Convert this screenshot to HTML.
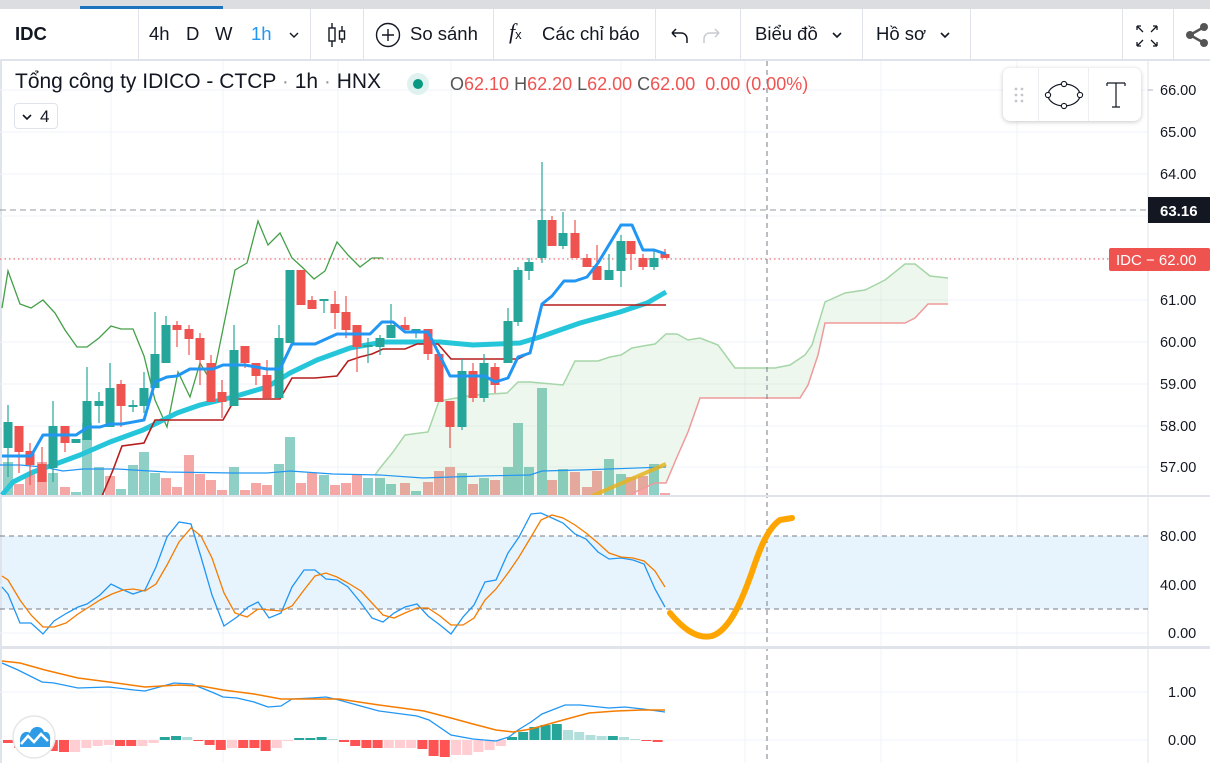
<!DOCTYPE html>
<html><head><meta charset="utf-8">
<style>
*{margin:0;padding:0;box-sizing:border-box}
body{width:1210px;height:763px;overflow:hidden;background:#fff;font-family:"Liberation Sans","Noto Sans CJK SC",sans-serif;color:#131722;position:relative}
#top{position:absolute;left:0;top:0;width:1210px;height:9px;background:#dcdde0}
#topbl{position:absolute;left:80px;top:6px;width:143px;height:3px;background:#1e73be}
#tb{position:absolute;left:0;top:9px;width:1210px;height:52px;background:#fff;border-bottom:2px solid #e0e3eb}
.sep{position:absolute;top:0;width:1px;height:50px;background:#e0e3eb}
.t{position:absolute;top:14px;font-size:18.5px;color:#131722;white-space:nowrap}
svg{position:absolute;left:0;top:0}
.ax{font-size:14.5px;fill:#131722;font-family:"Liberation Sans",sans-serif}
#leg{position:absolute;left:15px;top:70px;font-size:21px;white-space:nowrap;color:#131722}
#ohlc{position:absolute;left:450px;top:74px;font-size:18px;white-space:nowrap;color:#ef5350}
#ohlc b{font-weight:normal;color:#555}
#btn4{position:absolute;left:14px;top:103px;width:44px;height:26px;border:1px solid #e0e3eb;border-radius:4px;font-size:17px;padding:3px 0 0 25px}
#ft{position:absolute;left:1003px;top:68px;width:138px;height:53px;background:#fff;border-radius:7px;box-shadow:0 1px 5px rgba(0,0,0,.22)}
</style></head><body>
<svg width="1210" height="763" id="c">
<defs>
<clipPath id="mp"><rect x="0" y="61" width="1148" height="435"/></clipPath>
<clipPath id="sp"><rect x="0" y="498" width="1148" height="149"/></clipPath>
<clipPath id="cp"><rect x="0" y="649" width="1148" height="114"/></clipPath>
</defs>
<rect x="0" y="61" width="2" height="702" fill="#dfe3ec"/>
<g stroke="#f0f3fa" stroke-width="1">
<line x1="111" y1="61" x2="111" y2="763"/><line x1="223" y1="61" x2="223" y2="763"/><line x1="338" y1="61" x2="338" y2="763"/><line x1="451" y1="61" x2="451" y2="763"/><line x1="621" y1="61" x2="621" y2="763"/><line x1="745" y1="61" x2="745" y2="763"/><line x1="881" y1="61" x2="881" y2="763"/><line x1="1017" y1="61" x2="1017" y2="763"/>
<line x1="0" y1="90" x2="1148" y2="90"/><line x1="0" y1="132" x2="1148" y2="132"/><line x1="0" y1="174" x2="1148" y2="174"/><line x1="0" y1="216" x2="1148" y2="216"/><line x1="0" y1="258" x2="1148" y2="258"/><line x1="0" y1="300" x2="1148" y2="300"/><line x1="0" y1="342" x2="1148" y2="342"/><line x1="0" y1="384" x2="1148" y2="384"/><line x1="0" y1="426" x2="1148" y2="426"/><line x1="0" y1="467" x2="1148" y2="467"/>
<line x1="0" y1="585" x2="1148" y2="585"/><line x1="0" y1="633" x2="1148" y2="633"/><line x1="0" y1="692" x2="1148" y2="692"/><line x1="0" y1="740" x2="1148" y2="740"/>
</g>
<rect x="2" y="536" width="1146" height="73" fill="#e3f2fd" opacity=".85"/>
<g id="vol" clip-path="url(#mp)"></g>
<g clip-path="url(#mp)">
<polygon fill="#4caf50" fill-opacity=".1" points="375,475 380,468 393,452 405,435 428,432 439,401 462,397 475,395 507,393 518,382 530,382 563,385 575,361 598,361 610,357 621,355 632,348 643,346 655,344 666,334 677,334 688,340 700,338 718,345 735,368 775,368 790,365 805,355 812,345 825,302 845,293 865,290 885,280 905,264 915,264 930,276 948,278 948,304 928,304 915,318 905,323 825,323 818,355 808,385 800,398 730,398 700,398 688,432 677,457 666,483 655,483 633,493 630,500 375,500"/>
<polyline fill="none" stroke="#a5d6a7" stroke-width="1.5" points="375,475 380,468 393,452 405,435 428,432 439,401 462,397 475,395 507,393 518,382 530,382 563,385 575,361 598,361 610,357 621,355 632,348 643,346 655,344 666,334 677,334 688,340 700,338 718,345 735,368 775,368 790,365 805,355 812,345 825,302 845,293 865,290 885,280 905,264 915,264 930,276 948,278"/>
<polyline fill="none" stroke="#ef9a9a" stroke-width="1.5" points="628,500 633,493 655,483 666,483 677,457 688,432 700,398 730,398 800,398 808,385 818,355 825,323 905,323 915,318 928,304 948,304"/>
<polyline fill="none" stroke="#2196f3" stroke-width="1.2" points="0,465 20,465 43,467 63,471 83,469 117,469 167,472 233,473 267,473 290,471 333,474 380,475 423,478 480,476 530,475 542,471 580,470 666,467"/>
<line x1="592" y1="496" x2="666" y2="464" stroke="#e6b422" stroke-width="4" opacity=".85"/>
<line x1="0" y1="210" x2="1148" y2="210" stroke="#9598a1" stroke-dasharray="6,4"/>
<line x1="0" y1="259" x2="1148" y2="259" stroke="#ef5350" stroke-dasharray="1.5,3"/>
<polyline fill="none" stroke="#43a047" stroke-width="1.3" points="2,308 8,271 20,304 31,308 43,300 55,313 65,330 77,347 87,347 99,338 111,326 121,329 133,329 144,356 155,400 167,427 178,372 190,397 200,363 212,383 235,270 247,263 258,221 268,245 280,233 292,258 302,267 314,279 325,271 337,242 348,255 360,267 372,258 383,258"/>
<polyline fill="none" stroke="#26c6da" stroke-width="5" stroke-linejoin="round" points="2,495 13,482 33,472 53,465 80,455 110,442 143,430 177,413 200,405 233,397 267,387 290,373 317,360 350,348 383,342 440,342 473,345 520,343 540,337 580,323 620,312 647,303 666,292"/>
<polyline fill="none" stroke="#b71c1c" stroke-width="1.6" points="102,496 113,470 122,446 144,443 155,420 223,420 235,399 280,399 292,378 315,378 337,376 348,361 360,357 372,354 383,349 405,349 417,344 438,344 451,359 518,359 530,353 542,305 666,305"/>
<g id="cand"></g>
<polyline fill="none" stroke="#2196f3" stroke-width="3" stroke-linejoin="round" points="2,456 31,456 43,435 76,435 88,427 100,427 110,424 122,424 144,420 155,382 167,377 177,376 190,369 213,369 223,365 245,365 267,369 280,369 292,344 315,344 337,334 370,334 382,322 393,322 405,332 428,332 450,376 485,376 495,382 508,378 518,357 530,353 542,304 552,296 564,281 575,281 587,277 598,263 621,225 632,225 643,250 654,250 666,254"/>
</g>
<line x1="767" y1="61" x2="767" y2="763" stroke="#787b86" stroke-dasharray="5,4"/>
<rect x="0" y="495" width="1210" height="2" fill="#e0e3eb"/>
<rect x="0" y="646" width="1210" height="3" fill="#e0e3eb"/>
<line x1="1148" y1="61" x2="1148" y2="763" stroke="#e0e3eb"/>
<g clip-path="url(#sp)">
<line x1="0" y1="536" x2="1148" y2="536" stroke="#787b86" stroke-dasharray="5,4"/>
<line x1="0" y1="609" x2="1148" y2="609" stroke="#787b86" stroke-dasharray="5,4"/>
<polyline fill="none" stroke="#2196f3" stroke-width="1.3" points="2,587 8,594 20,623 31,623 43,634 54,621 67,613 78,607 87,604 100,595 111,584 121,589 133,594 145,590 156,567 167,537 179,522 191,524 201,557 212,595 224,626 237,617 248,607 258,602 269,618 281,613 292,587 304,570 315,570 326,579 337,580 348,587 361,603 372,618 383,622 394,613 405,607 417,604 428,616 440,625 451,634 463,617 474,605 485,582 496,580 508,553 519,537 531,514 541,513 552,518 563,523 575,534 586,539 598,552 609,559 621,558 633,560 644,564 655,589 665,607"/>
<polyline fill="none" stroke="#f57c00" stroke-width="1.3" points="2,576 8,580 20,600 31,615 43,627 54,627 66,623 78,614 89,607 100,600 112,594 123,590 133,589 145,591 156,584 167,565 179,542 191,528 201,536 212,558 224,593 235,613 247,617 258,609 269,610 281,611 292,606 304,590 315,576 326,573 337,577 348,583 361,591 372,603 383,615 394,618 405,613 417,608 428,608 440,616 451,625 463,625 474,618 485,600 496,589 508,573 519,557 531,537 541,520 552,515 563,518 575,525 586,533 598,543 609,553 621,557 633,558 644,561 655,571 665,587"/>
<path d="M670,613 C680,625 695,640 712,636 C730,630 742,600 752,572 C760,548 768,528 780,520 L792,518" fill="none" stroke="#ffa500" stroke-width="6" stroke-linecap="round"/>
</g>
<g clip-path="url(#cp)">
<g id="hist"></g>
<polyline fill="none" stroke="#2196f3" stroke-width="1.3" points="2,663 18,670 42,682 54,683 78,688 109,687 134,690 145,691 174,683 192,684 214,693 223,697 237,698 254,702 268,707 281,706 292,699 312,698 326,697 339,700 357,705 379,711 402,714 417,716 429,720 451,735 473,739 496,741 509,737 518,730 531,722 542,714 565,705 580,705 609,708 625,707 643,709 665,712"/>
<polyline fill="none" stroke="#f57c00" stroke-width="1.5" points="2,661 20,663 45,670 78,678 109,682 145,687 179,685 201,686 223,690 254,694 281,699 339,699 379,705 424,711 451,718 473,724 496,730 513,732 531,729 563,720 589,713 616,711 643,710 665,710"/>
</g>
<circle cx="34" cy="737" r="21" fill="#fff" stroke="#e6e6e6" stroke-width="1.5"/>
<path d="M20,747 L20,740 C20,733 26,730 30,733 C32,725 42,725 44,732 C49,731 51,736 50,741 L50,747 Z" fill="#2e9be6"/>
<path d="M21,744 L28,736 L34,742 L41,734 L48,741" fill="none" stroke="#fff" stroke-width="2.5"/>
<text class="ax" x="1160" y="95">66.00</text><text class="ax" x="1160" y="137">65.00</text><text class="ax" x="1160" y="179">64.00</text>
<text class="ax" x="1160" y="305">61.00</text><text class="ax" x="1160" y="347">60.00</text><text class="ax" x="1160" y="389">59.00</text><text class="ax" x="1160" y="431">58.00</text><text class="ax" x="1160" y="472">57.00</text>
<text class="ax" x="1160" y="541">80.00</text><text class="ax" x="1160" y="590">40.00</text><text class="ax" x="1168" y="638">0.00</text>
<text class="ax" x="1168" y="697">1.00</text><text class="ax" x="1168" y="745">0.00</text>
<line x1="1148" y1="90" x2="1153" y2="90" stroke="#b2b5be"/>
<rect x="1148" y="197" width="62" height="26" fill="#131722"/>
<text x="1160" y="216" fill="#fff" font-size="15" font-weight="bold" font-family="Liberation Sans">63.16</text>
<rect x="1109" y="248" width="101" height="23" rx="2" fill="#ef5350"/>
<text x="1116" y="265" fill="#fff" font-size="15" font-family="Liberation Sans">IDC − 62.00</text>
</svg>

<div id="top"></div><div id="topbl"></div>
<div id="tb">
<div class="t" style="left:15px;font-weight:bold">IDC</div>
<div class="sep" style="left:138px"></div>
<div class="t" style="left:149px">4h</div><div class="t" style="left:186px">D</div><div class="t" style="left:215px">W</div><div class="t" style="left:251px;color:#2196f3">1h</div>
<svg style="left:288px;top:21px" width="12" height="10"><path d="M2,3 L6,7 L10,3" fill="none" stroke="#131722" stroke-width="1.4"/></svg>
<div class="sep" style="left:310px"></div>
<svg style="left:326px;top:12px" width="22" height="28"><line x1="6" y1="2" x2="6" y2="26" stroke="#131722" stroke-width="1.4"/><rect x="3" y="7" width="6" height="13" fill="#fff" stroke="#131722" stroke-width="1.4"/><line x1="16" y1="5" x2="16" y2="22" stroke="#131722" stroke-width="1.4"/><rect x="13.5" y="10" width="5" height="8" fill="#fff" stroke="#131722" stroke-width="1.4"/></svg>
<div class="sep" style="left:363px"></div>
<svg style="left:375px;top:13px" width="26" height="26"><circle cx="13" cy="13" r="11.5" fill="none" stroke="#131722" stroke-width="1.4"/><path d="M13,7 V19 M7,13 H19" stroke="#131722" stroke-width="1.4"/></svg>
<div class="t" style="left:410px">So sánh</div>
<div class="sep" style="left:493px"></div>
<div class="t" style="left:509px;font-family:'Liberation Serif',serif;font-style:italic;font-size:22px;top:10px">f<span style="font-size:13px;font-style:normal;font-family:'Liberation Sans'">x</span></div>
<div class="t" style="left:542px">Các chỉ báo</div>
<div class="sep" style="left:655px"></div>
<svg style="left:667px;top:16px" width="56" height="20"><path d="M5,8 H14 C18,8 20,11 20,14 V18 M5,8 L9,4 M5,8 L9,12" fill="none" stroke="#131722" stroke-width="1.5"/><path d="M52,8 H43 C39,8 37,11 37,14 V18 M52,8 L48,4 M52,8 L48,12" fill="none" stroke="#c8cad0" stroke-width="1.5"/></svg>
<div class="sep" style="left:740px"></div>
<div class="t" style="left:755px">Biểu đồ</div>
<svg style="left:831px;top:21px" width="12" height="10"><path d="M2,3 L6,7 L10,3" fill="none" stroke="#131722" stroke-width="1.6"/></svg>
<div class="sep" style="left:862px"></div>
<div class="t" style="left:876px">Hồ sơ</div>
<svg style="left:939px;top:21px" width="12" height="10"><path d="M2,3 L6,7 L10,3" fill="none" stroke="#131722" stroke-width="1.6"/></svg>
<div class="sep" style="left:970px"></div>
<div class="sep" style="left:1122px"></div>
<svg style="left:1134px;top:14px" width="26" height="26"><g fill="none" stroke="#131722" stroke-width="1.3"><path d="M3,3 L9,9 M3,3 H7 M3,3 V7"/><path d="M23,3 L17,9 M23,3 H19 M23,3 V7"/><path d="M3,23 L9,17 M3,23 H7 M3,23 V19"/><path d="M23,23 L17,17 M23,23 H19 M23,23 V19"/></g></svg>
<div class="sep" style="left:1173px"></div>
<svg style="left:1184px;top:14px" width="26" height="24"><circle cx="6" cy="12" r="4" fill="#555"/><circle cx="20" cy="4" r="4" fill="#555"/><circle cx="20" cy="20" r="4" fill="#555"/><path d="M6,12 L20,4 M6,12 L20,20" stroke="#555" stroke-width="2.5"/></svg>
</div>

<div id="leg">Tổng công ty IDICO - CTCP <span style="color:#999">·</span> 1h <span style="color:#999">·</span> HNX</div>
<svg style="left:406px;top:72px" width="24" height="24"><circle cx="12" cy="12" r="11" fill="#dff2ef"/><circle cx="12" cy="12" r="5" fill="#089981"/></svg>
<div id="ohlc"><b>O</b>62.10 <b>H</b>62.20 <b>L</b>62.00 <b>C</b>62.00 &nbsp;0.00 (0.00%)</div>
<div id="btn4"><svg style="position:absolute;left:6px;top:9px" width="12" height="8"><path d="M2,2 L6,6 L10,2" fill="none" stroke="#131722" stroke-width="1.6"/></svg>4</div>

<div id="ft">
<div style="position:absolute;left:35px;top:0;width:1px;height:53px;background:#eceef2"></div>
<div style="position:absolute;left:85px;top:0;width:1px;height:53px;background:#eceef2"></div>
<svg style="position:absolute;left:0;top:0" width="138" height="53">
<g fill="#c4c6cc"><circle cx="13" cy="21" r="1.4"/><circle cx="19" cy="21" r="1.4"/><circle cx="13" cy="27" r="1.4"/><circle cx="19" cy="27" r="1.4"/><circle cx="13" cy="33" r="1.4"/><circle cx="19" cy="33" r="1.4"/></g>
<ellipse cx="61" cy="27" rx="16" ry="11" fill="none" stroke="#131722" stroke-width="1.2"/>
<g fill="#fff" stroke="#131722" stroke-width="1.1"><circle cx="61" cy="16" r="2.6"/><circle cx="61" cy="38" r="2.6"/><circle cx="45" cy="27" r="2.6"/><circle cx="77" cy="27" r="2.6"/></g>
<path d="M104,15 H122 M104,15 V18 M122,15 V18 M113,15 V39 M109,39 H117" fill="none" stroke="#131722" stroke-width="1.2"/>
</svg>
</div>

<script>
var C=[[8,'g',422,448,405,477],[19,'r',426,452,426,473],[30,'r',451,465,443,485],[42,'r',464,482,447,482],[53,'g',426,468,401,482],[65,'r',426,443,426,452],[76,'g',439,443,439,443],[87,'g',401,440,367,440],[99,'g',401,406,392,423],[110,'g',388,427,363,427],[121,'r',384,406,380,427],[133,'g',405,407,400,412],[144,'g',388,406,372,413],[155,'g',354,388,312,388],[166,'g',325,363,316,363],[177,'r',325,330,321,347],[189,'r',329,339,325,355],[200,'r',338,360,333,385],[211,'r',363,402,355,402],[222,'r',392,402,380,418],[234,'g',350,406,325,406],[245,'r',346,363,346,368],[256,'r',363,376,363,385],[267,'r',375,398,360,398],[279,'g',338,398,325,398],[290,'g',270,343,270,343],[301,'r',270,305,270,305],[312,'r',300,309,296,309],[324,'g',299,301,299,313],[335,'r',304,313,291,329],[346,'r',312,330,296,338],[357,'r',325,347,325,372],[368,'g',345,347,338,363],[380,'g',338,347,335,355],[391,'g',325,338,304,338],[405,'r',325,330,317,330],[416,'g',329,331,329,338],[428,'r',329,354,329,360],[439,'r',354,402,354,402],[450,'r',401,427,401,448],[462,'g',371,427,359,430],[473,'r',371,398,363,402],[484,'g',363,398,354,402],[495,'r',367,385,363,393],[508,'g',321,363,308,363],[518,'g',270,322,267,326],[529,'g',262,271,258,280],[542,'g',220,258,162,263],[552,'r',220,246,216,246],[563,'g',233,246,212,249],[575,'r',233,258,220,258],[587,'r',258,267,254,267],[597,'r',266,280,245,280],[609,'g',270,280,254,280],[621,'g',241,271,235,287],[631,'r',241,254,241,270],[643,'r',258,267,254,270],[654,'g',258,267,250,270],[665,'r',254,258,249,258]];
var V=[[8,462,'g'],[19,484,'r'],[30,473,'r'],[42,462,'r'],[53,473,'g'],[65,487,'r'],[76,492,'g'],[87,423,'g'],[99,467,'g'],[110,476,'r'],[121,489,'g'],[133,465,'g'],[144,452,'g'],[155,473,'g'],[166,478,'r'],[177,487,'r'],[189,455,'r'],[200,474,'r'],[211,480,'r'],[222,490,'r'],[234,467,'g'],[245,490,'r'],[256,483,'r'],[267,485,'r'],[279,464,'g'],[290,437,'g'],[301,483,'r'],[312,473,'r'],[324,475,'g'],[335,485,'r'],[346,483,'r'],[357,475,'r'],[368,478,'g'],[380,478,'g'],[391,484,'g'],[405,483,'r'],[416,491,'g'],[428,482,'r'],[439,471,'r'],[450,467,'r'],[462,473,'g'],[473,484,'r'],[484,478,'g'],[495,480,'r'],[508,467,'g'],[518,423,'g'],[529,467,'g'],[542,388,'g'],[552,480,'r'],[563,469,'g'],[575,472,'r'],[587,487,'r'],[597,471,'r'],[609,459,'g'],[621,474,'g'],[631,477,'r'],[643,476,'r'],[654,464,'g'],[665,493,'r']];
var H=[[-3,'R'],[-8,'R'],[-9,'R'],[-10,'R'],[-11,'R'],[-12,'R'],[-12,'P'],[-8,'P'],[-6,'P'],[-5,'P'],[-6,'R'],[-6,'R'],[-6,'P'],[-3,'P'],[3,'T'],[4,'T'],[3,'L'],[-1,'R'],[-5,'R'],[-10,'R'],[-8,'P'],[-8,'R'],[-8,'R'],[-11,'R'],[-8,'P'],[-1,'P'],[2,'T'],[2,'T'],[3,'T'],[1,'L'],[-2,'R'],[-6,'R'],[-8,'R'],[-8,'R'],[-8,'P'],[-8,'P'],[-8,'P'],[-9,'R'],[-16,'R'],[-17,'R'],[-15,'P'],[-15,'P'],[-12,'P'],[-10,'P'],[-6,'P'],[3,'T'],[8,'T'],[13,'T'],[15,'T'],[16,'T'],[10,'L'],[8,'L'],[5,'L'],[4,'L'],[4,'T'],[3,'L'],[1,'L'],[-1,'R'],[-2,'R']];
var ns='http://www.w3.org/2000/svg';
function el(p,t,a){var e=document.createElementNS(ns,t);for(var k in a)e.setAttribute(k,a[k]);p.appendChild(e);}
var g=document.getElementById('cand');
C.forEach(function(c){var col=c[1]=='g'?'#26a69a':'#ef5350';el(g,'line',{x1:c[0],x2:c[0],y1:c[4],y2:c[5],stroke:col,'stroke-width':1.2});el(g,'rect',{x:c[0]-4.5,y:c[2],width:9,height:Math.max(1.5,c[3]-c[2]),fill:col});});
var v=document.getElementById('vol');
V.forEach(function(b){el(v,'rect',{x:b[0]-5,y:b[1],width:10,height:496-b[1],fill:b[2]=='g'?'#8fd0c6':'#f5a7a5'});});
var h=document.getElementById('hist');
var cols={R:'#ff5252',P:'#ffcdd2',T:'#26a69a',L:'#b2dfdb'};
H.forEach(function(b,i){var x=8+i*11.2;var val=b[0];el(h,'rect',{x:x-5,y:val>0?740-val:740,width:10,height:Math.abs(val),fill:cols[b[1]]});});
</script>
</body></html>
